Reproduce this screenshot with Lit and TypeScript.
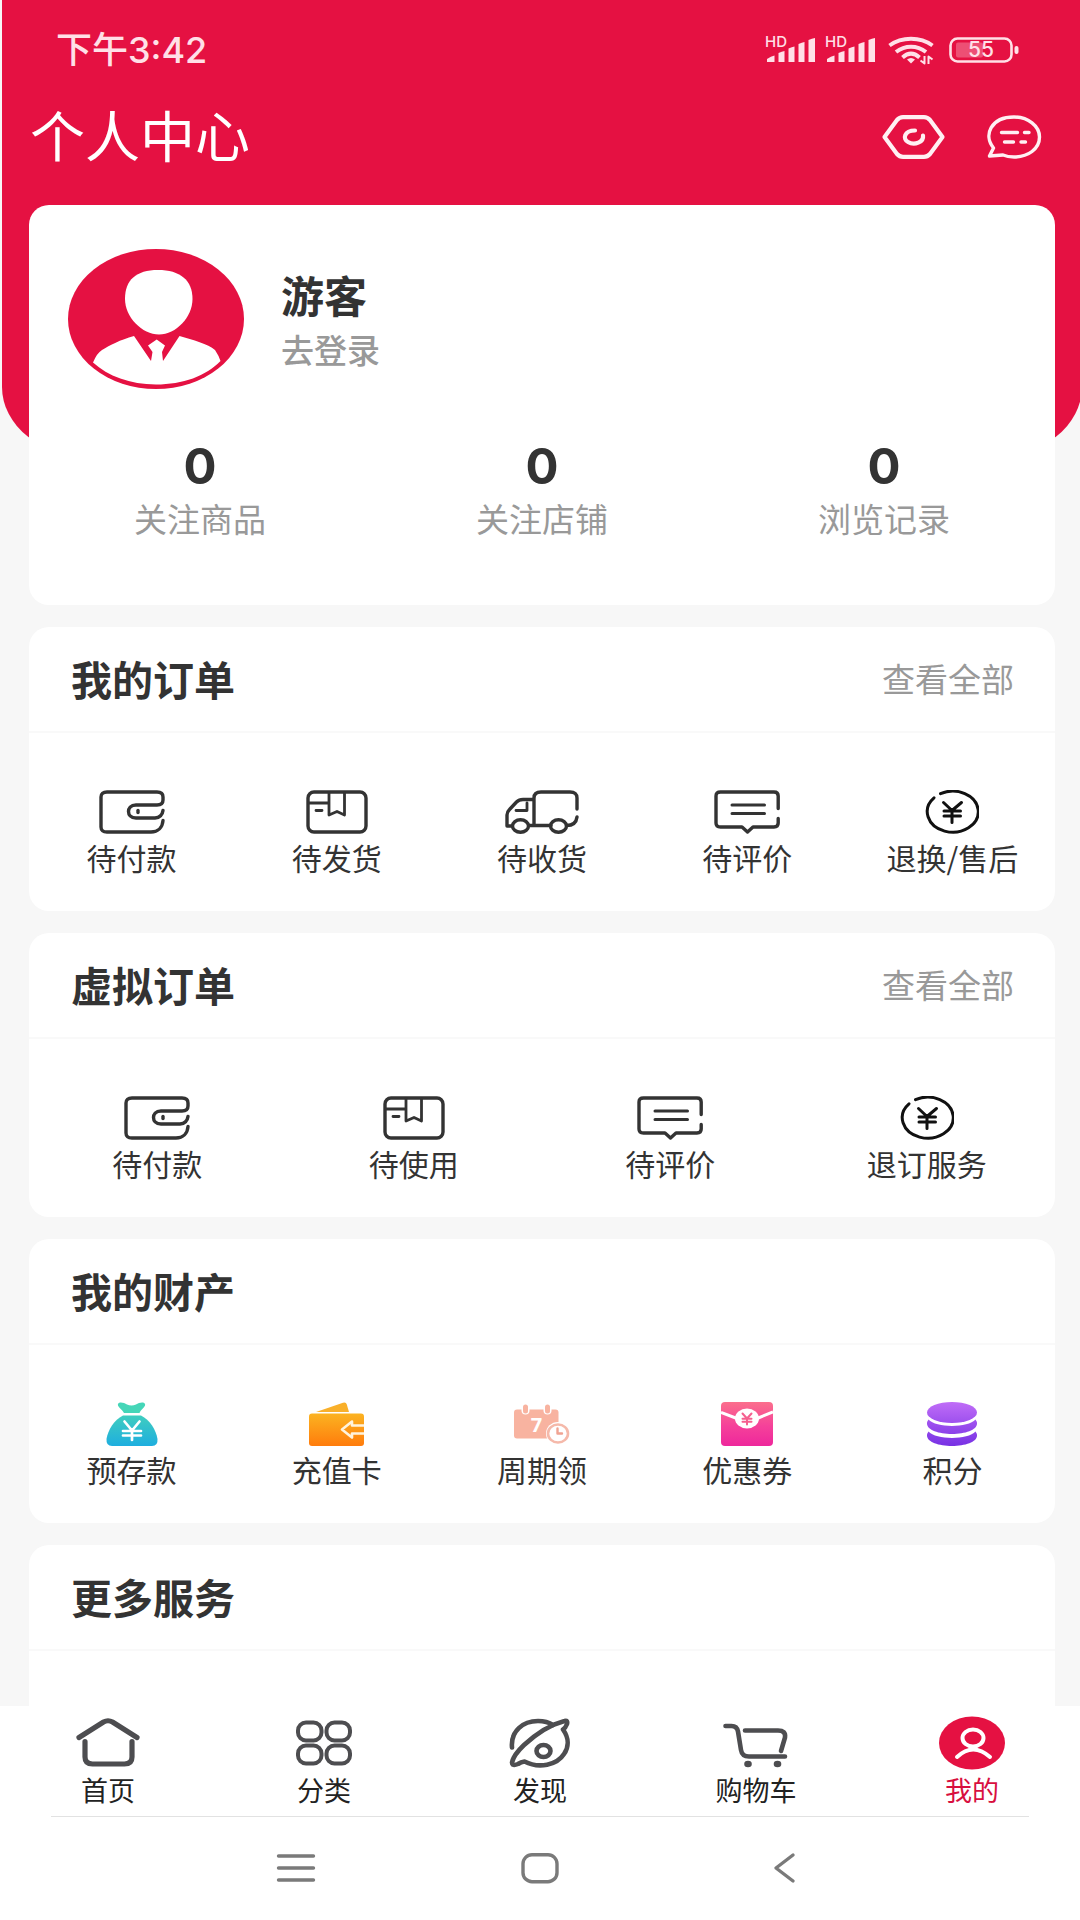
import { LitElement, html, svg, css, TemplateResult } from "lit";
import { customElement, property } from "lit/decorators.js";
import { classMap } from "lit/directives/class-map.js";

type Icon = TemplateResult;

interface Entry {
  label: string;
  icon: Icon;
}

const draw = (w: number, h: number, body: unknown): Icon => html`<svg
  width=${w}
  height=${h}
  viewBox="0 0 ${w} ${h}"
  fill="none"
  stroke="currentColor"
  stroke-width="3.400"
  stroke-linecap="round"
  stroke-linejoin="round"
  aria-hidden="true"
>${body}</svg>`;

/* Order icons */
const walletIcon = draw(66, 44, svg`
  <path d="M64 30.500C63.500 37.500 59 42 52 42H8Q2 42 2 37V7Q2 2 8 2H58Q64 2 64 7V10Q64 15 58 15H37C31.500 15 29.500 18.500 29.500 21.500C29.500 24.500 31.500 28 37 28H56Q63 27.500 64 20.500"/>
  <path d="M39 20.500V22.500"/>`);
const boxIcon = draw(62, 44, svg`
  <rect x="2" y="2" width="58" height="40" rx="6"/>
  <g stroke-width="2.800"><path d="M2.500 13H23M23 2.500V25L31 21.500L38.500 25V2.500M10 20.500H16"/></g>`);
const truckIcon = draw(74, 44, svg`
  <path d="M72 19V8Q72 2 65 2H36Q29 2 29 8V35.500M29 9.500H18Q14 9.500 11.500 12L4.500 19.500Q2 22 2 25V36H7M24 35.500H46M61.500 35.500Q71 35.500 72 27"/>
  <ellipse cx="15.500" cy="36" rx="8" ry="6.300"/><ellipse cx="53.500" cy="36" rx="8" ry="6.300"/>
  <path d="M22 13V20.500H11" stroke-width="2.800"/>`);
const reviewIcon = draw(66, 44, svg`
  <path d="M64.200 18.500V6Q64.200 2 60 2H6.500Q2 2 2 6V33Q2 37 6.500 37H28L33.500 42L39 37H60Q64.200 37 64.200 33V28.500"/>
  <path d="M18 15H50.500M18 23.500H50.500" stroke-width="3"/>`);
const refundIcon = draw(54, 44, svg`
  <g stroke="#111" stroke-width="3">
  <path d="M9 7.800A25.500 20.500 0 1 0 15.500 3.700"/>
  <path d="M18.500 12.500L27 20.500L36.500 12.500M27 20.500V32.500M19 21H35.500M19 26H35.500"/></g>`);

/* Asset icons */
const bagIcon = draw(52, 44, svg`
  <defs><linearGradient id="bag" x1="0" y1="0" x2="0" y2="1"><stop offset="0" stop-color="#3fcdbf"/><stop offset="1" stop-color="#1eaedf"/></linearGradient></defs>
  <path stroke="none" fill="#45d6b8" d="M18 11C16 7 11 5 12 2C13.500-.5 18 .8 21 2.500Q25.500 4.500 30 2.500C33 .8 37.500-.5 39 2C40 5 35 7 33.500 11Z"/>
  <path stroke="none" fill="url(#bag)" d="M17 13.500H35C44 18 50 28 51.500 37Q52 44 46 44H6Q0 44 .5 37C2 28 8 18 17 13.500Z"/>
  <path stroke="#fff" stroke-width="2.700" d="M18.500 19.500L26 28.500L33.500 19.500M26 28.500V38M17 29H35M17 33.500H35"/>`);
const rechargeIcon = draw(55, 44, svg`
  <defs><linearGradient id="rch" x1="0" y1="0" x2="0" y2="1"><stop offset="0" stop-color="#fbb321"/><stop offset="1" stop-color="#ff7c0c"/></linearGradient></defs>
  <path stroke="none" fill="#f9b02a" d="M7 10L34 .8Q37-.2 37.800 2.500L40 10Z"/>
  <rect stroke="none" fill="url(#rch)" y="11.500" width="55" height="32.500" rx="3"/>
  <path stroke="#fff3dd" stroke-width="2.600" stroke-linecap="butt" d="M55 23.500H43V19.500L33 27.500L43 35.500V31.500H55"/>`);
const periodIcon = draw(56, 44, svg`
  <g stroke="none" fill="#f8b3a0">
  <rect y="7.500" width="44.500" height="29" rx="3"/>
  <rect x="7.500" y="1.500" width="8" height="11" rx="4" fill="#fff"/><rect x="29.500" y="1.500" width="8" height="11" rx="4" fill="#fff"/>
  <rect x="9" y="2.500" width="5" height="9" rx="2.500"/><rect x="31" y="2.500" width="5" height="9" rx="2.500"/>
  <text class="day" x="22.500" y="30" text-anchor="middle" fill="#fff">7</text>
  <ellipse cx="44" cy="31.500" rx="12" ry="11.500" fill="#fff"/></g>
  <ellipse cx="44" cy="31.500" rx="10" ry="9" stroke="#f5b9aa" stroke-width="2.600"/>
  <path d="M43.500 26.500V31.500H48" stroke="#f0a392" stroke-width="2.400"/>`);
const couponIcon = draw(52, 44, svg`
  <defs><linearGradient id="cpn" x1="0" y1="0" x2="0" y2="1"><stop offset="0" stop-color="#fb6f8c"/><stop offset=".55" stop-color="#f5419a"/><stop offset="1" stop-color="#ee279c"/></linearGradient></defs>
  <rect stroke="none" fill="url(#cpn)" width="52" height="44" rx="4"/>
  <path stroke="#fff" stroke-width="3" stroke-linecap="butt" d="M0 10.500L16 16.500M52 10L36 16.500"/>
  <ellipse stroke="none" fill="#fff" cx="26" cy="16.500" rx="12" ry="10"/>
  <path stroke="#f5608f" stroke-width="2" d="M21.500 11.500L26 16.500L30.500 11.500M26 16.500V22.500M21.500 16.800H30.500M21.500 19.800H30.500"/>`);
const coinsIcon = draw(50, 44, svg`
  <defs><linearGradient id="cns" gradientUnits="userSpaceOnUse" x1="0" y1="0" x2="0" y2="44"><stop offset="0" stop-color="#c06df7"/><stop offset="1" stop-color="#7731e4"/></linearGradient></defs>
  <g stroke="none" fill="url(#cns)"><ellipse cx="25" cy="10.500" rx="25" ry="10.500"/>
  <path d="M1.500 17.500C9 26 41 26 48.500 17.500Q50 19.500 50 21.500C50 28 38 32 25 32C12 32 0 28 0 21.500Q0 19.500 1.500 17.500Z"/>
  <path d="M1.500 29.500C9 38 41 38 48.500 29.500Q50 31.500 50 33.500C50 40 38 44 25 44C12 44 0 40 0 33.500Q0 31.500 1.500 29.500Z"/></g>`);

/* Tab icons */
const homeIcon = draw(64, 54, svg`<g stroke-width="5.200">
  <path d="M3 21.500L27.500 6Q32 3.500 36.500 6L61 21.500"/>
  <path d="M9 25.500V41Q9 48 16.500 48H48.500Q56 48 56 41V25.500"/></g>`);
const categoryIcon = draw(56, 54, svg`<g stroke-width="4">
  <rect x="2" y="6.500" width="23.500" height="18" rx="8"/><rect x="30.500" y="6.500" width="23.500" height="18" rx="8"/>
  <rect x="2" y="29.500" width="23.500" height="18" rx="8"/><rect x="30.500" y="29.500" width="23.500" height="18" rx="8"/></g>`);
const discoverIcon = draw(62, 54, svg`<g stroke-width="4.600">
  <path d="M3 31.500C1.500 15 14 5 29 5Q38 5 44 9"/>
  <path d="M55.500 5Q59 4 58 8Q56.500 12 54 13.500C60 22 60 31 55 38C48 49 30 53 15.500 45.500Q12 46 9 48Q3 50.500 3 46.500Q4.500 39 15 29C27 18 42 8.500 55.500 5Z"/>
  <ellipse cx="34.500" cy="35" rx="7" ry="6"/></g>`);
const cartIcon = draw(66, 54, svg`<g stroke-width="4.600">
  <path d="M2.500 10H8.500Q14 10 15 15.500L18 34Q19 40.500 26 40.500H62"/>
  <path d="M22 14.500H55Q63 14.500 62 21.500L58 35"/></g>
  <g stroke="none" fill="currentColor"><ellipse cx="25" cy="48" rx="3.800" ry="3.200"/><ellipse cx="54.500" cy="48" rx="3.800" ry="3.200"/></g>`);
const mineIcon = draw(66, 54, svg`
  <ellipse cx="33" cy="27" rx="33" ry="26.500" fill="#e51142" stroke="none"/>
  <g stroke="#fff" stroke-width="4"><ellipse cx="34" cy="22" rx="10.500" ry="8.500"/><path d="M18 41Q34 26 51 41"/></g>`);

/* Header icons */
const signalIcon = draw(50, 28, svg`<g stroke="none" fill="currentColor">
  <text class="hd" x="0" y="11">HD</text>
  <path d="M2 26V23Q6 20 9.500 19.500V26ZM13.500 26V17Q17 15.500 19.500 15V26ZM23.500 26V12.500Q27 11 29.500 10.500V26ZM33.500 26V8Q37 6.500 39.500 6V26ZM43.500 26V4Q47 2.500 50 2V26Z"/></g>`);
const wifiIcon = draw(46, 28, svg`<g stroke-width="4" stroke-linecap="butt">
  <path d="M1.500 9.500C14 .5 32 .5 44.500 9.500M8 16C17 9 29 9 38 16M14.500 21.500C20 16.500 26 16.500 31.500 21.500"/></g>
  <path stroke="none" fill="currentColor" d="M19 23.500Q23 20.500 27 23.500L23 27.500Z"/>
  <path stroke-width="2" stroke-linecap="butt" d="M36.500 20V27.500L32.500 24.500M40.500 28V20.500L44.500 23.500"/>`);
const batteryIcon = draw(70, 26, svg`
  <rect x="1.500" y="1.500" width="61" height="23" rx="7" stroke-width="2.600"/>
  <rect x="7" y="5.500" width="27" height="15" rx="2" fill="currentColor" fill-opacity=".3" stroke="none"/>
  <rect x="65.500" y="9" width="4" height="8" rx="2" fill="currentColor" stroke="none"/>
  <text class="charge" x="32" y="20" text-anchor="middle" fill="currentColor" stroke="none">55</text>`);
const settingsIcon = draw(63, 44, svg`<g stroke-width="4.200">
  <path d="M2.500 22L15 5Q17.500 2.200 21 2.200H42Q45.500 2.200 48 5L60.500 22L48 39Q45.500 41.800 42 41.800H21Q17.500 41.800 15 39Z"/>
  <path stroke-width="4.200" d="M33 15.500C22 15.500 20.500 24 26 27C32.500 31 42 27 41 20.500"/></g>`);
const messageIcon = draw(56, 44, svg`
  <path d="M3.500 41L7.500 33C-3 20 5 2 28 2C42 2 53.500 11 53.500 22C53.500 34 42 42 28 42C24 42 20 41.300 17 40Z"/>
  <path d="M15.500 17.500H31.500M38.500 17.500H43M18.500 27H27.500M35 27H39.500"/>`);
const avatar = draw(176, 140, svg`<g stroke="none">
  <ellipse cx="88" cy="70" rx="88" ry="70" fill="#e51142"/>
  <path fill="#fff" d="M90 21C112 21 124.500 31 124.500 50C124.500 68 108 85.500 91 85.500C74 85.500 57 68 57 50C57 31 68 21 90 21Z"/>
  <path fill="#fff" d="M66 87L83 112L84.500 103L80 96.500L88.700 90.500L97 96.500L94 103L95 112L111.500 87C125 91 140 95 147 101Q151 107 152.500 112C138 127 115 135.500 88 135.500C62 135.500 40 127 25 113.500Q29 104 34 101C42 96 52 91 66 87Z"/></g>`);

/* System navigation icons */
const recentsIcon = draw(38, 30, svg`<path d="M1.500 3H36.500M1.500 15H36.500M1.500 27H36.500"/>`);
const squareIcon = draw(38, 30, svg`<rect x="2" y="1.700" width="34" height="27" rx="9"/>`);
const backIcon = draw(22, 30, svg`<path d="M20 2L3 15L20 28"/>`);

@customElement("entry-card")
class EntryCard extends LitElement {
  @property() heading = "";
  @property() more = "";
  @property({ attribute: false }) entries: Entry[] = [];

  static styles = css`
    :host {
      display: block;
      background: #fff;
      border-radius: 20px;
      color: #333;
    }
    .head {
      display: flex;
      align-items: center;
      justify-content: space-between;
      padding: 26px 41px 28px 42px;
      border-bottom: 2px solid #f9f9f9;
    }
    .title {
      margin: 0;
      font-size: 41px;
      line-height: 50px;
      font-weight: 700;
    }
    .more {
      font-size: 33px;
      line-height: 50px;
      color: #999;
      text-decoration: none;
    }
    .entries {
      display: grid;
      grid-auto-flow: column;
      grid-auto-columns: minmax(0, 1fr);
      margin: 0;
      padding: 57px 0 38px;
      list-style: none;
    }
    .entry {
      display: flex;
      flex-direction: column;
      align-items: center;
      gap: 7px;
      color: #333;
      font-size: 30px;
      line-height: 32px;
      white-space: nowrap;
      text-decoration: none;
    }
    svg {
      display: block;
    }
    .day {
      font: 700 20px "Noto Sans", sans-serif;
    }
  `;

  render() {
    return html`
      <div class="head">
        <h2 class="title">${this.heading}</h2>
        ${this.more ? html`<a class="more" href="#">${this.more}</a>` : null}
      </div>
      ${this.entries.length
        ? html`<ul class="entries">
            ${this.entries.map(
              (e) => html`<li><a class="entry" href="#">${e.icon}<span>${e.label}</span></a></li>`
            )}
          </ul>`
        : null}
    `;
  }
}

@customElement("app-root")
class AppRoot extends LitElement {
  static styles = css`
    :host {
      display: flex;
      flex-direction: column;
      min-height: 100vh;
      overflow: hidden;
      background: #f7f7f7;
      font-family: "Noto Sans CJK SC", sans-serif;
    }
    svg {
      display: block;
      overflow: visible;
    }
    .screen {
      flex: 1;
      display: flex;
      flex-direction: column;
      margin: 0 -2px 0 2px;
    }
    .hero {
      padding-bottom: 267px;
      background: #e51142;
      border-radius: 0 0 88px 88px / 0 0 70px 70px;
      color: #fff;
    }
    .status {
      display: flex;
      align-items: center;
      justify-content: space-between;
      padding: 20px 63px 0 54px;
      color: #ffe0e7;
      font-family: Inter, "Noto Sans CJK SC", sans-serif;
      font-size: 36px;
      line-height: 60px;
      font-weight: 500;
    }
    .signals {
      display: flex;
      align-items: center;
      gap: 10px;
    }
    .wifi {
      margin: 0 5px 0 3px;
    }
    .hd {
      font: 500 15px Inter, sans-serif;
    }
    .charge {
      font: 500 21px Inter, sans-serif;
    }
    .appbar {
      display: flex;
      align-items: center;
      justify-content: space-between;
      padding: 0 40px 0 28px;
    }
    .page-title {
      margin: 0;
      font-size: 55px;
      line-height: 106px;
      padding-bottom: 4px;
      font-weight: 400;
    }
    .actions {
      display: flex;
      gap: 41px;
      padding-top: 4px;
      color: #fff0f3;
    }
    button {
      padding: 0;
      border: 0;
      background: none;
      color: inherit;
      font: inherit;
    }
    .cards {
      flex: 1;
      display: flex;
      flex-direction: column;
      gap: 22px;
      margin: -252px 27px 0;
    }
    .profile {
      padding: 44px 0 67px;
      background: #fff;
      border-radius: 20px;
    }
    .user {
      display: flex;
      align-items: center;
      gap: 37px;
      padding: 0 39px;
    }
    .identity {
      display: flex;
      flex-direction: column;
      gap: 12px;
    }
    .name {
      font-size: 43px;
      line-height: 48px;
      font-weight: 700;
      color: #333;
    }
    .login {
      font-size: 33px;
      line-height: 38px;
      font-weight: 500;
      color: #999;
      text-decoration: none;
    }
    .stats {
      display: grid;
      grid-template-columns: repeat(3, 1fr);
      margin-top: 47px;
    }
    .stat {
      display: flex;
      flex-direction: column;
      align-items: center;
      color: #999;
      font-size: 33px;
      line-height: 40px;
      text-decoration: none;
    }
    .count {
      font-family: Inter, sans-serif;
      font-size: 49px;
      line-height: 62px;
      font-weight: 700;
      color: #333;
    }
    .rest {
      flex: 1;
      min-height: 161px;
      border-radius: 20px 20px 0 0;
    }
    .dock {
      position: sticky;
      bottom: 0;
      background: #fff;
    }
    .tabs {
      display: grid;
      grid-template-columns: repeat(5, 1fr);
      padding: 10px 0 12px;
    }
    .tab {
      display: flex;
      flex-direction: column;
      align-items: center;
      gap: 5px;
      color: #4d4d50;
      font-size: 27px;
      line-height: 29px;
      text-decoration: none;
    }
    .tab-label {
      color: #222;
    }
    .active .tab-label {
      color: #d8103f;
    }
    .system {
      display: grid;
      grid-template-columns: repeat(3, 1fr);
      justify-items: center;
      margin: 0 51px;
      padding: 36px 123px 37px;
      border-top: 1px solid #e2e2e2;
      color: #7a7a7a;
    }
  `;

  private orders: Entry[] = [
    { label: "待付款", icon: walletIcon },
    { label: "待发货", icon: boxIcon },
    { label: "待收货", icon: truckIcon },
    { label: "待评价", icon: reviewIcon },
    { label: "退换/售后", icon: refundIcon },
  ];

  private virtualOrders: Entry[] = [
    { label: "待付款", icon: walletIcon },
    { label: "待使用", icon: boxIcon },
    { label: "待评价", icon: reviewIcon },
    { label: "退订服务", icon: refundIcon },
  ];

  private assets: Entry[] = [
    { label: "预存款", icon: bagIcon },
    { label: "充值卡", icon: rechargeIcon },
    { label: "周期领", icon: periodIcon },
    { label: "优惠券", icon: couponIcon },
    { label: "积分", icon: coinsIcon },
  ];

  private tabs: Entry[] = [
    { label: "首页", icon: homeIcon },
    { label: "分类", icon: categoryIcon },
    { label: "发现", icon: discoverIcon },
    { label: "购物车", icon: cartIcon },
    { label: "我的", icon: mineIcon },
  ];

  private stats = ["关注商品", "关注店铺", "浏览记录"];

  render() {
    return html`
      <div class="screen">
        <header class="hero">
          <div class="status">
            <span>下午3:42</span>
            <div class="signals">
              ${signalIcon}${signalIcon}
              <div class="wifi">${wifiIcon}</div>
              ${batteryIcon}
            </div>
          </div>
          <div class="appbar">
            <h1 class="page-title">个人中心</h1>
            <div class="actions">
              <button aria-label="设置">${settingsIcon}</button>
              <button aria-label="消息">${messageIcon}</button>
            </div>
          </div>
        </header>
        <main class="cards">
          <section class="profile">
            <div class="user">
              ${avatar}
              <div class="identity">
                <span class="name">游客</span>
                <a class="login" href="#">去登录</a>
              </div>
            </div>
            <div class="stats">
              ${this.stats.map(
                (s) => html`<a class="stat" href="#"><span class="count">0</span><span>${s}</span></a>`
              )}
            </div>
          </section>
          <entry-card heading="我的订单" more="查看全部" .entries=${this.orders}></entry-card>
          <entry-card heading="虚拟订单" more="查看全部" .entries=${this.virtualOrders}></entry-card>
          <entry-card heading="我的财产" .entries=${this.assets}></entry-card>
          <entry-card class="rest" heading="更多服务"></entry-card>
        </main>
      </div>
      <footer class="dock">
        <nav class="tabs">
          ${this.tabs.map(
            (t) => html`<a class=${classMap({ tab: true, active: t.label === "我的" })} href="#">
              ${t.icon}<span class="tab-label">${t.label}</span>
            </a>`
          )}
        </nav>
        <div class="system">
          <button aria-label="最近任务">${recentsIcon}</button>
          <button aria-label="主屏幕">${squareIcon}</button>
          <button aria-label="返回">${backIcon}</button>
        </div>
      </footer>
    `;
  }
}
